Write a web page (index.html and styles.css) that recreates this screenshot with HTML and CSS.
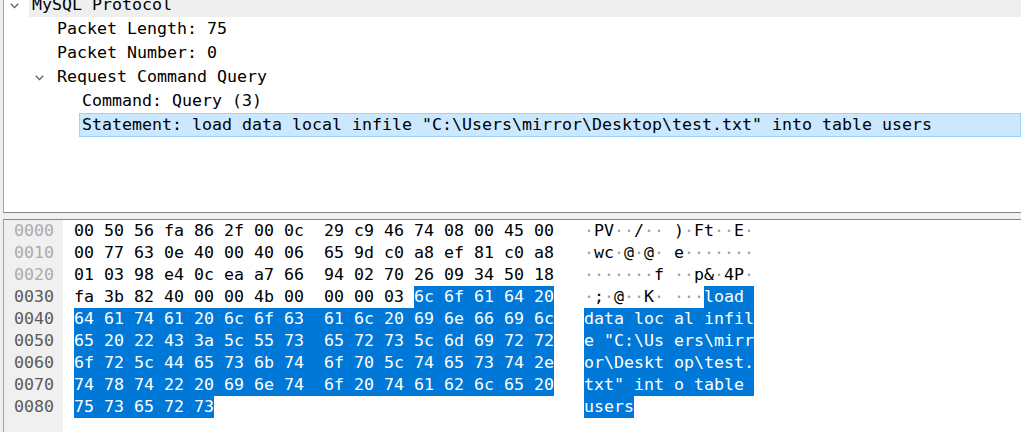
FILE: index.html
```html
<!DOCTYPE html>
<html>
<head>
<meta charset="utf-8">
<link rel="stylesheet" href="styles.css">
</head>
<body>
<div class="app">
  <section class="tree">
    <div class="tree-scroll">
      <div class="node lvl0">
        <span class="tog"><svg width="9" height="6" viewBox="0 0 9 6"><path d="M0.8 0.8 L4.5 4.6 L8.2 0.8" fill="none" stroke="#5a5a5a" stroke-width="1.3"/></svg></span>
        <span class="lbl hover">MySQL Protocol</span>
      </div>
      <div class="node lvl1">
        <span class="tog"></span>
        <span class="lbl">Packet Length: 75</span>
      </div>
      <div class="node lvl1">
        <span class="tog"></span>
        <span class="lbl">Packet Number: 0</span>
      </div>
      <div class="node lvl1">
        <span class="tog"><svg width="9" height="6" viewBox="0 0 9 6"><path d="M0.8 0.8 L4.5 4.6 L8.2 0.8" fill="none" stroke="#5a5a5a" stroke-width="1.3"/></svg></span>
        <span class="lbl">Request Command Query</span>
      </div>
      <div class="node lvl2">
        <span class="tog"></span>
        <span class="lbl">Command: Query (3)</span>
      </div>
      <div class="node lvl2">
        <span class="tog"></span>
        <span class="lbl selected">Statement: load data local infile "C:\Users\mirror\Desktop\test.txt" into table users</span>
      </div>
    </div>
  </section>
  <div class="splitter"></div>
  <section class="bytes">
    <div class="offsets">
      <div class="off dim">0000</div>
      <div class="off dim">0010</div>
      <div class="off dim">0020</div>
      <div class="off">0030</div>
      <div class="off">0040</div>
      <div class="off">0050</div>
      <div class="off">0060</div>
      <div class="off">0070</div>
      <div class="off">0080</div>
    </div>
    <div class="hex">
      <div class="line">00 50 56 fa 86 2f 00 0c  29 c9 46 74 08 00 45 00</div>
      <div class="line">00 77 63 0e 40 00 40 06  65 9d c0 a8 ef 81 c0 a8</div>
      <div class="line">01 03 98 e4 0c ea a7 66  94 02 70 26 09 34 50 18</div>
      <div class="line">fa 3b 82 40 00 00 4b 00  00 00 03 <span class="sel">6c 6f 61 64 20</span></div>
      <div class="line"><span class="sel">64 61 74 61 20 6c 6f 63  61 6c 20 69 6e 66 69 6c</span></div>
      <div class="line"><span class="sel">65 20 22 43 3a 5c 55 73  65 72 73 5c 6d 69 72 72</span></div>
      <div class="line"><span class="sel">6f 72 5c 44 65 73 6b 74  6f 70 5c 74 65 73 74 2e</span></div>
      <div class="line"><span class="sel">74 78 74 22 20 69 6e 74  6f 20 74 61 62 6c 65 20</span></div>
      <div class="line"><span class="sel">75 73 65 72 73</span></div>
    </div>
    <div class="ascii">
      <div class="line"><span class="np">·</span>PV<span class="np">··</span>/<span class="np">··</span> )<span class="np">·</span>Ft<span class="np">··</span>E<span class="np">·</span></div>
      <div class="line"><span class="np">·</span>wc<span class="np">·</span>@<span class="np">·</span>@<span class="np">·</span> e<span class="np">·······</span></div>
      <div class="line"><span class="np">·······</span>f <span class="np">··</span>p&amp;<span class="np">·</span>4P<span class="np">·</span></div>
      <div class="line"><span class="np">·</span>;<span class="np">·</span>@<span class="np">··</span>K<span class="np">·</span> <span class="np">···</span><span class="sel">load </span></div>
      <div class="line"><span class="sel">data loc al infil</span></div>
      <div class="line"><span class="sel">e "C:\Us ers\mirr</span></div>
      <div class="line"><span class="sel">or\Deskt op\test.</span></div>
      <div class="line"><span class="sel">txt" int o table </span></div>
      <div class="line"><span class="sel">users</span></div>
    </div>
  </section>
</div>
</body>
</html>
```
FILE: styles.css
```css
html, body {
  margin: 0;
  padding: 0;
  overflow: hidden;
}

body {
  background: #f0f0f0;
  font-family: "DejaVu Sans Mono", "Liberation Mono", monospace;
  font-size: 16.61px;
  color: #000;
}

.app {
  display: flex;
  flex-direction: column;
  height: 432px;
  padding-left: 3px;
  box-sizing: border-box;
}

.tree {
  height: 212px;
  flex: none;
  background: #fff;
  border-left: 1px solid #a0a0a0;
  border-bottom: 1px solid #828790;
  overflow: hidden;
}

.tree-scroll {
  margin-top: -7px;
}

.node {
  display: flex;
  align-items: stretch;
  height: 24px;
}

.lvl0 { padding-left: 0; }
.lvl1 { padding-left: 25px; }
.lvl2 { padding-left: 50px; }

.tog {
  flex: none;
  width: 28px;
  display: flex;
  align-items: center;
  padding-left: 6px;
  box-sizing: border-box;
}

.tog svg {
  display: block;
  margin-top: 1px;
}

.lbl {
  flex: 1;
  margin-left: -3px;
  padding-left: 2px;
  border: 1px solid transparent;
  line-height: 22px;
  white-space: pre;
}

.lbl.hover {
  background: #efefef;
  border-color: #efefef;
}

.lbl.selected {
  background: #cce8ff;
  border-color: #99d1ff;
}

.splitter {
  height: 6px;
  flex: none;
  background: #f0f0f0;
}

.bytes {
  flex: 1;
  display: flex;
  align-items: stretch;
  background: #fff;
  border-left: 1px solid #a0a0a0;
  border-top: 1px solid #828790;
}

.offsets {
  width: 59px;
  flex: none;
  background: #f0f0f0;
}

.off {
  height: 22px;
  line-height: 22px;
  padding-left: 10px;
  color: #5a5a5a;
}

.off.dim {
  color: #ababab;
}

.hex {
  margin-left: 11px;
  width: 480px;
  flex: none;
}

.ascii {
  margin-left: 30px;
  flex: none;
}

.line {
  height: 22px;
  line-height: 22px;
  white-space: pre;
}

.sel {
  display: inline-block;
  vertical-align: top;
  height: 22px;
  line-height: 22px;
  background: #0078d7;
  color: #fff;
  white-space: pre;
}

.np {
  color: #a0a0a0;
}
```
